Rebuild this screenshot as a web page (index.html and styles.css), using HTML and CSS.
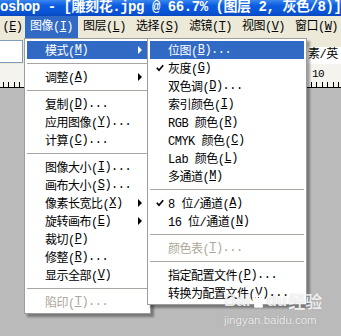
FILE: index.html
```html
<!DOCTYPE html>
<html lang="zh-CN">
<head>
  <meta charset="UTF-8" />
  <title>Photoshop - 图像菜单</title>
  <link rel="stylesheet" href="styles.css">
</head>
<body>

<div class="titlebar">oshop - [雕刻花.jpg @ 66.7% (图层 2, 灰色/8)]</div>

<div class="menubar">
  <span class="menubar-item first">(<u>E</u>)</span>
  <span class="menubar-item active">图像(<u>I</u>)</span>
  <span class="menubar-item">图层(<u>L</u>)</span>
  <span class="menubar-item">选择(<u>S</u>)</span>
  <span class="menubar-item">滤镜(<u>T</u>)</span>
  <span class="menubar-item">视图(<u>V</u>)</span>
  <span class="menubar-item">窗口(<u>W</u>)</span>
</div>

<div class="options">
  <div class="field field-left"></div>
  <div class="field field-right">素/英</div>
</div>

<div class="ruler"><span class="ruler-num">10</span></div>

<div class="workspace"></div>

<!-- 图像 menu -->
<div class="dropdown main-menu">
  <div class="row active has-sub"><span class="mark"></span>模式(<u>M</u>)</div>
  <div class="sep"></div>
  <div class="row has-sub"><span class="mark"></span>调整(<u>A</u>)</div>
  <div class="sep"></div>
  <div class="row"><span class="mark"></span>复制(<u>D</u>)...</div>
  <div class="row"><span class="mark"></span>应用图像(<u>Y</u>)...</div>
  <div class="row"><span class="mark"></span>计算(<u>C</u>)...</div>
  <div class="sep"></div>
  <div class="row"><span class="mark"></span>图像大小(<u>I</u>)...</div>
  <div class="row"><span class="mark"></span>画布大小(<u>S</u>)...</div>
  <div class="row has-sub"><span class="mark"></span>像素长宽比(<u>X</u>)</div>
  <div class="row has-sub"><span class="mark"></span>旋转画布(<u>E</u>)</div>
  <div class="row"><span class="mark"></span>裁切(<u>P</u>)</div>
  <div class="row"><span class="mark"></span>修整(<u>R</u>)...</div>
  <div class="row"><span class="mark"></span>显示全部(<u>V</u>)</div>
  <div class="sep"></div>
  <div class="row disabled"><span class="mark"></span>陷印(<u>T</u>)...</div>
</div>

<!-- 模式 submenu -->
<div class="dropdown sub-menu">
  <div class="row active"><span class="mark"></span>位图(<u>B</u>)...</div>
  <div class="row"><span class="mark"><svg width="8" height="8" viewBox="0 0 8 8"><polyline points="0.8,3.8 3,6.2 7.2,1.2" fill="none" stroke="#000" stroke-width="1.7"/></svg></span>灰度(<u>G</u>)</div>
  <div class="row"><span class="mark"></span>双色调(<u>D</u>)...</div>
  <div class="row"><span class="mark"></span>索引颜色(<u>I</u>)</div>
  <div class="row"><span class="mark"></span>RGB 颜色(<u>R</u>)</div>
  <div class="row"><span class="mark"></span>CMYK 颜色(<u>C</u>)</div>
  <div class="row"><span class="mark"></span>Lab 颜色(<u>L</u>)</div>
  <div class="row"><span class="mark"></span>多通道(<u>M</u>)</div>
  <div class="sep"></div>
  <div class="row"><span class="mark"><svg width="8" height="8" viewBox="0 0 8 8"><polyline points="0.8,3.8 3,6.2 7.2,1.2" fill="none" stroke="#000" stroke-width="1.7"/></svg></span>8 位/通道(<u>A</u>)</div>
  <div class="row"><span class="mark"></span>16 位/通道(<u>N</u>)</div>
  <div class="sep"></div>
  <div class="row disabled"><span class="mark"></span>颜色表(<u>T</u>)...</div>
  <div class="sep"></div>
  <div class="row"><span class="mark"></span>指定配置文件(<u>P</u>)...</div>
  <div class="row"><span class="mark"></span>转换为配置文件(<u>V</u>)...</div>
</div>

<div class="watermark">
  <div class="wm-logo">Bai<svg width="16" height="16" viewBox="0 0 16 16"><g fill="#fff"><ellipse cx="4" cy="6" rx="1.8" ry="2.3"/><ellipse cx="7" cy="3" rx="1.7" ry="2.2"/><ellipse cx="10.5" cy="3.3" rx="1.7" ry="2.2"/><ellipse cx="13" cy="6.8" rx="1.7" ry="2.2"/><path d="M8.5 7.5c2 0 4.5 3.5 4.5 5.5 0 2-2 2-4.5 1.5C6 15 4 15 4 13c0-2 2.5-5.5 4.5-5.5z"/></g></svg>du<span class="wm-cn">经验</span></div>
  <div class="wm-url">jingyan.baidu.com</div>
</div>

</body>
</html>
```

FILE: styles.css
```css
body {
  margin: 0;
  width: 341px;
  height: 336px;
  overflow: hidden;
  position: relative;
  background-color: #bababa;
  font-family: "Liberation Mono", "Noto Sans CJK SC", monospace;
  font-size: 12px;
  letter-spacing: -0.5px;
  color: #000;
}

u {
  text-decoration: underline;
  text-underline-offset: 1px;
}

.titlebar {
  height: 16px;
  line-height: 14px;
  white-space: nowrap;
  overflow: hidden;
  color: #fff;
  font-weight: bold;
  font-size: 14px;
  letter-spacing: -0.45px;
  background: linear-gradient(#3b87f2, #0b5ce0 35%, #0a55d6 75%, #0848c0);
}

.menubar {
  height: 22px;
  display: flex;
  background-color: #ece9d8;
  white-space: nowrap;
}

.menubar-item {
  width: 53px;
  flex-shrink: 0;
  line-height: 22px;
  text-align: center;
}

.menubar-item.first {
  width: 25px;
}

.menubar-item.active {
  background-color: #316ac5;
  color: #fff;
}

.options {
  height: 26px;
  display: flex;
  justify-content: space-between;
  background-color: #ece9d8;
}

.field {
  background-color: #fff;
  box-sizing: border-box;
}

.field-left {
  width: 23px;
  height: 23px;
  margin-top: 2px;
  border: 1px solid #7f9db9;
  border-left: none;
}

.field-right {
  align-self: flex-end;
  width: 34px;
  height: 17px;
  line-height: 16px;
  padding-left: 1px;
  white-space: nowrap;
}

.ruler {
  height: 24px;
  box-sizing: border-box;
  padding: 5px 0 0 312px;
  font-size: 11px;
  line-height: 11px;
  background-color: #f4f3ee;
  border-bottom: 1px solid #000;
  background-image: repeating-linear-gradient(to right, #000 0 1px, transparent 1px 5.5px);
  background-size: 100% 5px;
  background-position: 3px 100%;
  background-repeat: no-repeat;
}

.workspace {
  height: 248px;
  background-color: #bababa;
}

.dropdown {
  position: absolute;
  top: 38px;
  background-color: #fff;
  border: 1px solid #9d9d9d;
  padding: 2px;
  box-shadow: 3px 3px 2px rgba(0, 0, 0, 0.35);
}

.main-menu {
  left: 24px;
  width: 121px;
}

.sub-menu {
  left: 147px;
  width: 154px;
}

.row {
  height: 18px;
  display: flex;
  align-items: center;
  white-space: nowrap;
}

.row.active {
  background-color: #316ac5;
  color: #fff;
}

.row.disabled {
  color: #aca899;
}

.mark {
  width: 16px;
  flex-shrink: 0;
  display: flex;
  justify-content: center;
  padding-left: 2px;
}

.has-sub::after {
  content: "";
  margin-left: auto;
  margin-right: 6px;
  border-left: 4px solid #000;
  border-top: 4px solid transparent;
  border-bottom: 4px solid transparent;
}

.row.active.has-sub::after {
  border-left-color: #fff;
}

.sep {
  height: 9px;
  display: flex;
  align-items: center;
}

.sep::before {
  content: "";
  flex: 1;
  height: 1px;
  background-color: #a7a6a0;
}

.watermark {
  position: absolute;
  left: 224px;
  top: 291px;
  color: rgba(255, 255, 255, 0.85);
  letter-spacing: 0;
}

.wm-logo {
  display: flex;
  align-items: center;
  font-family: "Liberation Sans", sans-serif;
  font-weight: bold;
  font-size: 17px;
  line-height: 20px;
  text-shadow: 0 0 1px rgba(0, 0, 0, 0.25);
}

.wm-cn {
  font-family: "Noto Sans CJK SC", sans-serif;
  font-size: 17px;
  margin-left: 1px;
}

.wm-url {
  font-family: "Liberation Sans", sans-serif;
  font-size: 11.5px;
  line-height: 14px;
  margin-top: 2px;
  text-shadow: 0 0 1px rgba(0, 0, 0, 0.25);
}
```
